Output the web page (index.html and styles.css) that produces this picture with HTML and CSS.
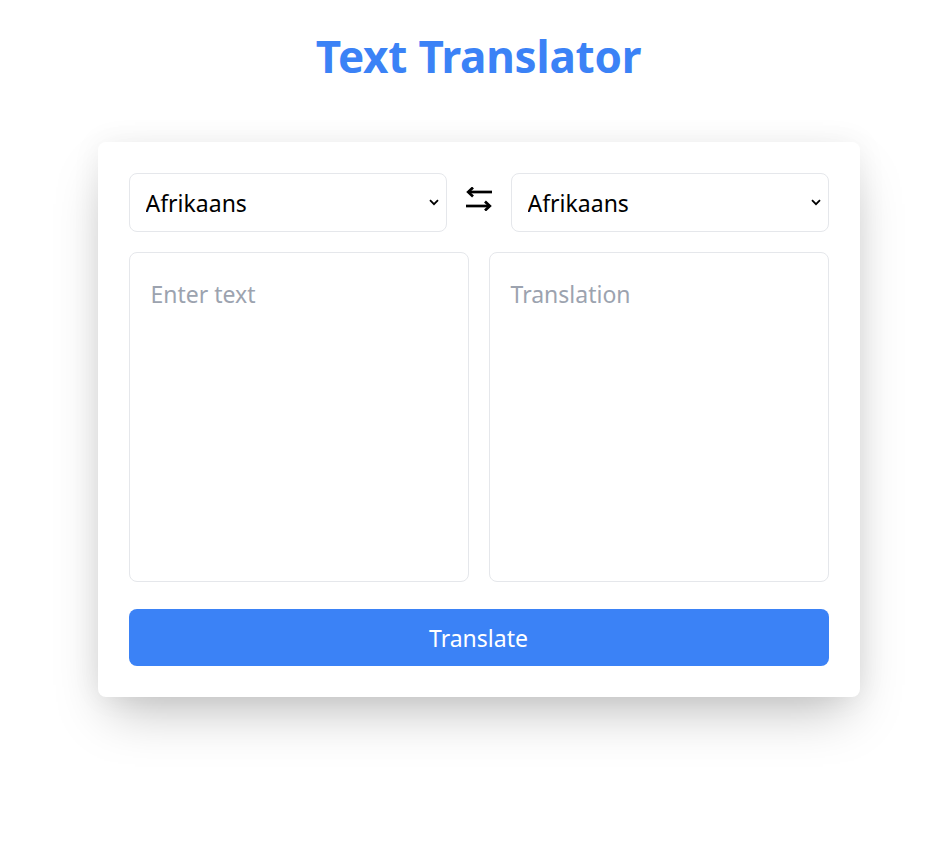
FILE: index.html
```html
<!DOCTYPE html>
<html lang="en">
<head>
<meta charset="utf-8">
<title>Text Translator</title>
<link rel="stylesheet" href="styles.css">
</head>
<body>
<main class="page">
  <h1 class="title">Text Translator</h1>
  <section class="card">
    <div class="lang-row">
      <select class="lang-select"><option>Afrikaans</option></select>
      <button class="swap" type="button" aria-label="Swap languages">
        <svg width="28" height="24" viewBox="0 0 28 24" fill="none" stroke="#000" stroke-width="2.7" stroke-linecap="butt" stroke-linejoin="miter">
          <path d="M27 5H3"/>
          <path d="M8 0.5L3.2 5L8 9.5"/>
          <path d="M1 19H25"/>
          <path d="M20 14.5L24.8 19L20 23.5"/>
        </svg>
      </button>
      <select class="lang-select"><option>Afrikaans</option></select>
    </div>
    <div class="text-row">
      <textarea class="text-box" placeholder="Enter text"></textarea>
      <textarea class="text-box" placeholder="Translation" readonly></textarea>
    </div>
    <button class="translate" type="button">Translate</button>
  </section>
</main>
</body>
</html>
```
FILE: styles.css
```css
* { box-sizing: border-box; }
html, body { margin: 0; padding: 0; background: #fff; }
body {
  font-family: "Noto Sans", "Open Sans", sans-serif;
  color: #000;
}
.page {
  width: 762px;
  margin: 0 auto;
  padding: 24px 0 100px;
  position: relative;
  left: 3px;
}
.title {
  margin: 0 0 54px;
  text-align: center;
  font-size: 44px;
  font-weight: 700;
  line-height: 64px;
  color: #3b82f6;
  letter-spacing: -0.2px;
}
.card {
  background: #fff;
  border-radius: 8px;
  padding: 31px;
  box-shadow: 0 25px 50px -12px rgba(0, 0, 0, 0.25), 0 0 30px rgba(0, 0, 0, 0.06);
}
.lang-row {
  display: flex;
  align-items: center;
  gap: 16px;
  margin-bottom: 20px;
}
.lang-select {
  flex: 1;
  height: 59px;
  border: 1px solid #e5e7eb;
  border-radius: 8px;
  padding: 0 16px;
  font-family: inherit;
  font-size: 23px;
  color: #000;
  background: #fff url("data:image/svg+xml;utf8,<svg xmlns='http://www.w3.org/2000/svg' width='10' height='7' viewBox='0 0 10 7'><path d='M1 1.2L5 5.2L9 1.2' fill='none' stroke='black' stroke-width='1.8'/></svg>") no-repeat right 7px center;
  -webkit-appearance: none;
  appearance: none;
}
.swap {
  width: 32px;
  height: 24px;
  padding: 0;
  border: 0;
  background: none;
  display: flex;
  align-items: center;
  justify-content: center;
  margin-top: -8px;
}
.text-row {
  display: grid;
  grid-template-columns: 1fr 1fr;
  gap: 20px;
  margin-bottom: 27px;
}
.text-box {
  display: block;
  height: 330px;
  border: 1px solid #e5e7eb;
  border-radius: 8px;
  padding: 25px 21px 22px;
  font-family: inherit;
  font-size: 23px;
  line-height: 32px;
  resize: none;
  outline: none;
}
.text-box::placeholder { color: #9ca3af; }
.translate {
  display: block;
  width: 100%;
  height: 57px;
  border: 0;
  border-radius: 8px;
  background: #3b82f6;
  color: #fff;
  font-family: inherit;
  font-size: 23px;
}
```
